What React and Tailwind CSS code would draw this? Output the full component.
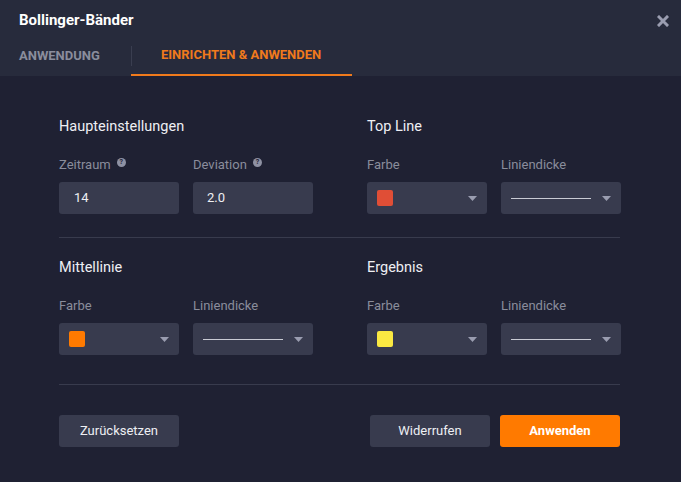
import React from "react";

const font = { fontFamily: "Roboto, 'Noto Sans', sans-serif" };

function Caret() {
  return (
    <svg width="9" height="5" viewBox="0 0 9 5" className="shrink-0">
      <path d="M0 0 L9 0 L4.5 5 Z" fill="#9a9db0" />
    </svg>
  );
}

function Help() {
  return (
    <span className="inline-flex items-center justify-center w-[9px] h-[9px] rounded-full bg-[#8e91a3] text-[#1f2133] text-[7px] font-bold leading-none ml-[6px] -translate-y-[3px]">
      ?
    </span>
  );
}

function Field({ label, help, children }) {
  return (
    <div className="flex flex-col w-[120px]">
      <div className="h-[16px] flex items-center text-[13px] text-[#8a8d9c]">
        {label}
        {help && <Help />}
      </div>
      <div className="mt-[9px] h-[32px] rounded-[3px] bg-[#383b4e] flex items-center">
        {children}
      </div>
    </div>
  );
}

function ColorSelect({ color }) {
  return (
    <div className="flex items-center justify-between w-full pl-[10px] pr-[10px]">
      <div className={`w-[16px] h-[16px] rounded-[2px] ${color}`} />
      <Caret />
    </div>
  );
}

function LineSelect() {
  return (
    <div className="flex items-center justify-between w-full pl-[10px] pr-[10px]">
      <div className="w-[80px] h-[1px] bg-[#c9cbd4]" />
      <Caret />
    </div>
  );
}

function Section({ title, children }) {
  return (
    <div className="w-[254px]">
      <div className="h-[20px] flex items-center text-[14.5px] text-[#eeeff3]">{title}</div>
      <div className="mt-[20px] flex gap-[14px]">{children}</div>
    </div>
  );
}

export default function App() {
  return (
    <div style={font} className="w-[681px] h-[482px] bg-[#1f2133] flex flex-col overflow-hidden">
      {/* header */}
      <div className="bg-[#272b3c] h-[76px] shrink-0 relative">
        <div className="h-[41px] flex items-center justify-between pl-[19px] pr-[12px]">
          <span className="text-[15px] font-bold text-white">Bollinger-Bänder</span>
          <svg width="12" height="12" viewBox="0 0 12 12">
            <path d="M2 2 L10 10 M10 2 L2 10" stroke="#9a9db0" strokeWidth="3" strokeLinecap="square" />
          </svg>
        </div>
        <div className="flex items-stretch h-[35px] pl-[19px]">
          <div className="flex items-center text-[13px] font-bold text-[#8a8d9c] w-[112px] pb-[6px]">
            ANWENDUNG
          </div>
          <div className="relative w-[221px] flex items-center pl-[30px] pb-[6px] text-[13px] font-bold text-[#f07a1c] border-b-2 border-[#f07a1c]">
            <div className="absolute left-0 top-[5px] h-[20px] w-[1px] bg-[#3a3e50]" />
            EINRICHTEN &amp; ANWENDEN
          </div>
        </div>
      </div>

      {/* body */}
      <div className="pl-[59px] pr-[61px] pt-[41px] flex flex-col">
        <div className="flex gap-[54px]">
          <Section title="Haupteinstellungen">
            <Field label="Zeitraum" help>
              <span className="pl-[15px] text-[13px] text-[#eeeff3]">14</span>
            </Field>
            <Field label="Deviation" help>
              <span className="pl-[14px] text-[13px] text-[#eeeff3]">2.0</span>
            </Field>
          </Section>
          <Section title="Top Line">
            <Field label="Farbe">
              <ColorSelect color="bg-[#e04e36]" />
            </Field>
            <Field label="Liniendicke">
              <LineSelect />
            </Field>
          </Section>
        </div>

        <div className="h-[1px] bg-[#383b4d] mt-[23px] mb-[20px]" />

        <div className="flex gap-[54px]">
          <Section title="Mittellinie">
            <Field label="Farbe">
              <ColorSelect color="bg-[#ff7a00]" />
            </Field>
            <Field label="Liniendicke">
              <LineSelect />
            </Field>
          </Section>
          <Section title="Ergebnis">
            <Field label="Farbe">
              <ColorSelect color="bg-[#fbe942]" />
            </Field>
            <Field label="Liniendicke">
              <LineSelect />
            </Field>
          </Section>
        </div>

        <div className="h-[1px] bg-[#383b4d] mt-[29px] mb-[30px]" />

        <div className="flex items-center">
          <button className="w-[120px] h-[32px] rounded-[3px] bg-[#383b4e] text-[13px] text-[#eeeff3]">
            Zurücksetzen
          </button>
          <div className="flex-1" />
          <button className="w-[120px] h-[32px] rounded-[3px] bg-[#383b4e] text-[13px] text-[#eeeff3]">
            Widerrufen
          </button>
          <button className="ml-[10px] w-[120px] h-[32px] rounded-[3px] bg-[#ff7a00] text-[13px] font-bold text-white">
            Anwenden
          </button>
        </div>
      </div>
    </div>
  );
}
